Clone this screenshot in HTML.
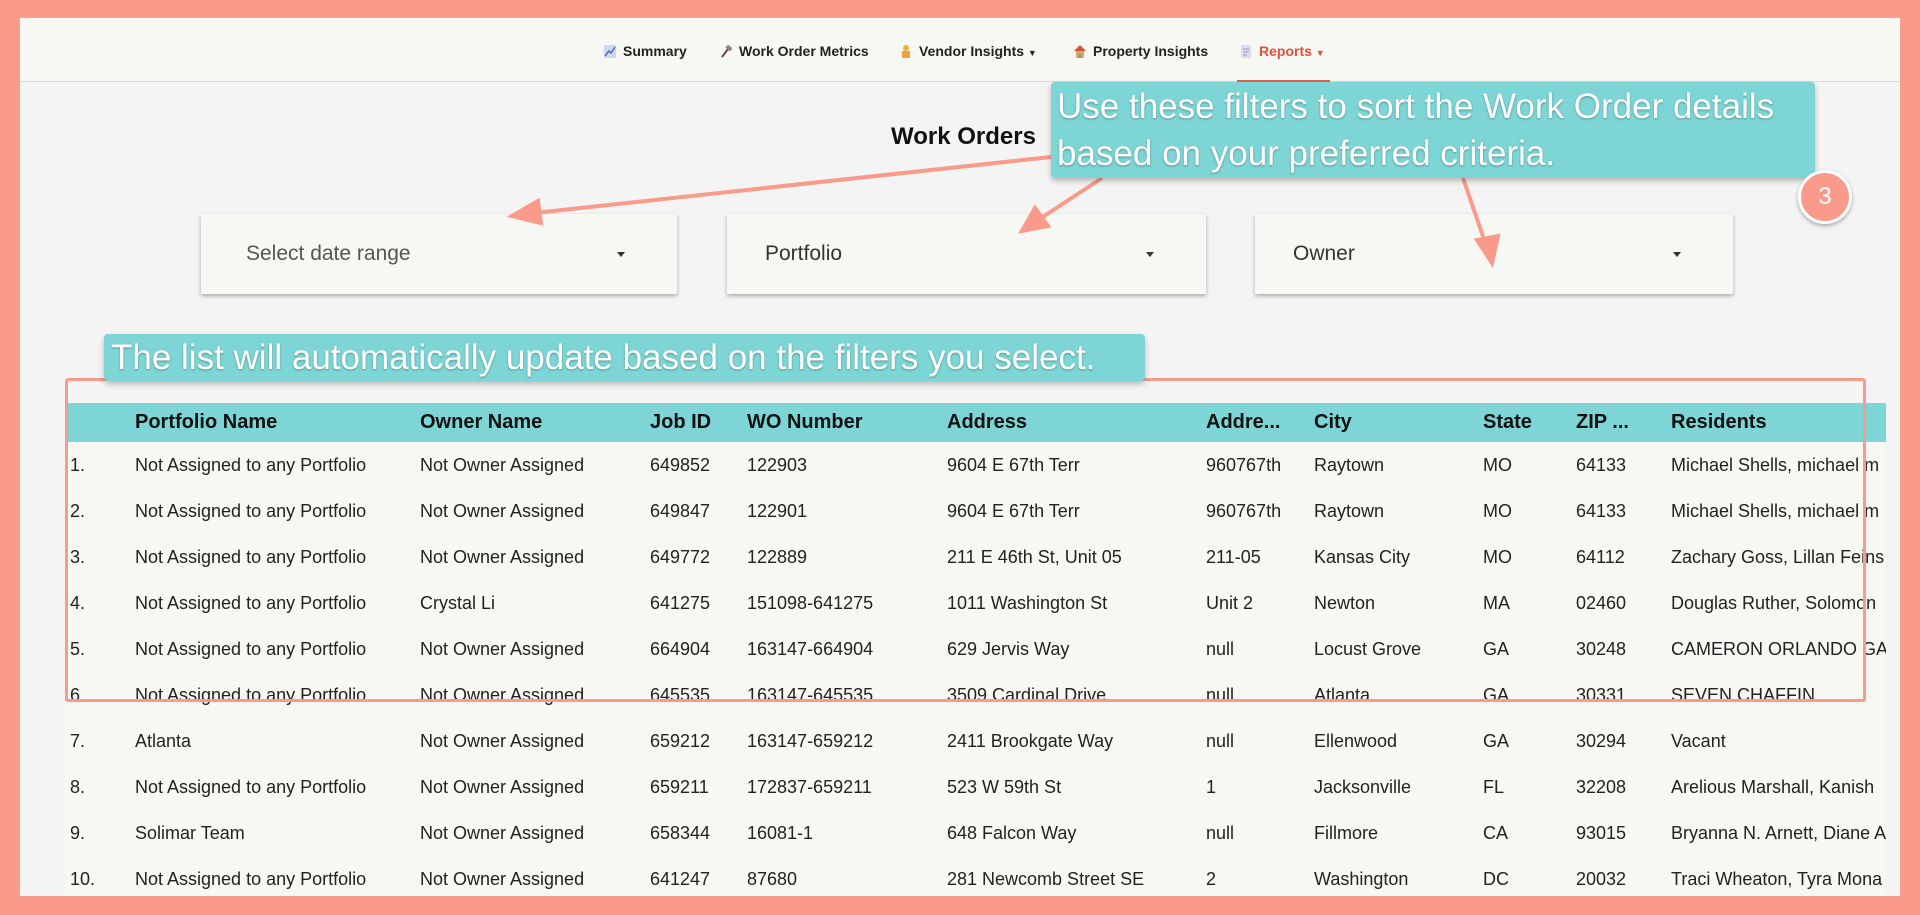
<!DOCTYPE html>
<html><head><meta charset="utf-8"><style>
*{margin:0;padding:0;box-sizing:border-box}
body{width:1920px;height:915px;background:#f99a8a;position:relative;overflow:hidden;font-family:"Liberation Sans",sans-serif;color:#222}
#page{position:absolute;left:20px;top:18px;width:1880px;height:878px;background:#f4f4f4;overflow:hidden}
#nav{position:absolute;left:0;top:0;width:1880px;height:64px;background:#f7f7f3;border-bottom:1px solid #d8d8d8}
.ni{position:absolute;top:25px;font-size:14px;font-weight:bold;color:#222;white-space:nowrap}
.ic{display:inline-block;width:12px;height:13px;margin-right:7px;vertical-align:-2px}
#ul{position:absolute;left:1217px;top:62px;width:93px;height:3px;background:#e0614f}
h1{position:absolute;left:871px;top:105px;font-size:24px;font-weight:bold;color:#111}
.dd{position:absolute;top:196px;height:80px;background:#f7f7f3;box-shadow:0 2px 4px rgba(0,0,0,.3)}
.dd span{position:absolute;left:38px;top:28px;font-size:21px;color:#333}
.dd i{position:absolute;right:52px;top:38px;border-left:4px solid transparent;border-right:4px solid transparent;border-top:5px solid #333}
.tip{position:absolute;background:#7dd5d5;color:#fff;border-radius:4px;box-shadow:0 3px 6px rgba(0,0,0,.25);text-shadow:0 1px 2px rgba(0,0,0,.3);white-space:nowrap;overflow:hidden}
table{position:absolute;left:45px;top:385px;width:1821px;border-collapse:collapse;font-size:18px;background:#f7f7f3;table-layout:fixed}
th{background:#7dd5d5;height:39px;text-align:left;font-weight:bold;font-size:20px;color:#111;white-space:nowrap;overflow:hidden}
td{height:46px;white-space:nowrap;overflow:hidden;color:#222}
#rect{position:absolute;left:45px;top:360px;width:1801px;height:324px;border:3px solid #f99a8a;border-radius:3px}
#c3{position:absolute;left:1778px;top:152px;width:54px;height:54px;border-radius:50%;background:#f99a8a;border:3px solid #fff;color:#fff;font-size:24px;text-align:center;line-height:48px;box-shadow:0 2px 4px rgba(0,0,0,.3)}
</style></head><body>
<div id="page">
<div id="nav">
<div class="ni" style="left:584px"><svg class="ic" viewBox="0 0 12 13"><rect width="12" height="13" fill="#cfd9ee"/><path d="M1 11L5 6L7 8L11 2" stroke="#4a6fc0" fill="none" stroke-width="1.5"/></svg>Summary</div>
<div class="ni" style="left:700px"><svg class="ic" viewBox="0 0 12 13"><path d="M2 12L8 4" stroke="#6b4a4a" stroke-width="2"/><rect x="6" y="1" width="6" height="4" fill="#888" transform="rotate(40 9 3)"/></svg>Work Order Metrics</div>
<div class="ni" style="left:880px"><svg class="ic" viewBox="0 0 12 13"><circle cx="6" cy="3" r="3" fill="#f0b030"/><rect x="2" y="6" width="8" height="7" fill="#f0a040"/></svg>Vendor Insights <span style="font-size:9px">▼</span></div>
<div class="ni" style="left:1054px"><svg class="ic" viewBox="0 0 12 13"><path d="M0 6L6 0L12 6Z" fill="#d2553a"/><rect x="2" y="6" width="8" height="7" fill="#e8a060"/><rect x="5" y="9" width="2" height="4" fill="#4aa0d0"/></svg>Property Insights</div>
<div class="ni" style="left:1220px;color:#e0503c"><svg class="ic" viewBox="0 0 12 13"><rect x="1" width="10" height="13" fill="#dcdcf0"/><path d="M3 4H9M3 7H9M3 10H7" stroke="#9a9ac0"/></svg>Reports <span style="font-size:9px">▼</span></div>
<div id="ul"></div>
</div>
<h1>Work Orders</h1>
<div class="dd" style="left:181px;width:476px"><span style="color:#555;left:45px">Select date range</span><i></i></div>
<div class="dd" style="left:707px;width:479px"><span>Portfolio</span><i></i></div>
<div class="dd" style="left:1235px;width:478px"><span>Owner</span><i></i></div>
<table>
<colgroup><col style="width:70px"><col style="width:285px"><col style="width:230px"><col style="width:97px"><col style="width:200px"><col style="width:259px"><col style="width:108px"><col style="width:169px"><col style="width:93px"><col style="width:95px"><col style="width:215px"></colgroup>
<tr><th></th><th>Portfolio Name</th><th>Owner Name</th><th>Job ID</th><th>WO Number</th><th>Address</th><th>Addre...</th><th>City</th><th>State</th><th>ZIP ...</th><th>Residents</th></tr>
<tr><td>&nbsp;1.</td><td>Not Assigned to any Portfolio</td><td>Not Owner Assigned</td><td>649852</td><td>122903</td><td>9604 E 67th Terr</td><td>960767th</td><td>Raytown</td><td>MO</td><td>64133</td><td>Michael Shells, michael m</td></tr>
<tr><td>&nbsp;2.</td><td>Not Assigned to any Portfolio</td><td>Not Owner Assigned</td><td>649847</td><td>122901</td><td>9604 E 67th Terr</td><td>960767th</td><td>Raytown</td><td>MO</td><td>64133</td><td>Michael Shells, michael m</td></tr>
<tr><td>&nbsp;3.</td><td>Not Assigned to any Portfolio</td><td>Not Owner Assigned</td><td>649772</td><td>122889</td><td>211 E 46th St, Unit 05</td><td>211-05</td><td>Kansas City</td><td>MO</td><td>64112</td><td>Zachary Goss, Lillan Feins</td></tr>
<tr><td>&nbsp;4.</td><td>Not Assigned to any Portfolio</td><td>Crystal Li</td><td>641275</td><td>151098-641275</td><td>1011 Washington St</td><td>Unit 2</td><td>Newton</td><td>MA</td><td>02460</td><td>Douglas Ruther, Solomon</td></tr>
<tr><td>&nbsp;5.</td><td>Not Assigned to any Portfolio</td><td>Not Owner Assigned</td><td>664904</td><td>163147-664904</td><td>629 Jervis Way</td><td>null</td><td>Locust Grove</td><td>GA</td><td>30248</td><td>CAMERON ORLANDO GA</td></tr>
<tr><td>&nbsp;6.</td><td>Not Assigned to any Portfolio</td><td>Not Owner Assigned</td><td>645535</td><td>163147-645535</td><td>3509 Cardinal Drive</td><td>null</td><td>Atlanta</td><td>GA</td><td>30331</td><td>SEVEN CHAFFIN</td></tr>
<tr><td>&nbsp;7.</td><td>Atlanta</td><td>Not Owner Assigned</td><td>659212</td><td>163147-659212</td><td>2411 Brookgate Way</td><td>null</td><td>Ellenwood</td><td>GA</td><td>30294</td><td>Vacant</td></tr>
<tr><td>&nbsp;8.</td><td>Not Assigned to any Portfolio</td><td>Not Owner Assigned</td><td>659211</td><td>172837-659211</td><td>523 W 59th St</td><td>1</td><td>Jacksonville</td><td>FL</td><td>32208</td><td>Arelious Marshall, Kanish</td></tr>
<tr><td>&nbsp;9.</td><td>Solimar Team</td><td>Not Owner Assigned</td><td>658344</td><td>16081-1</td><td>648 Falcon Way</td><td>null</td><td>Fillmore</td><td>CA</td><td>93015</td><td>Bryanna N. Arnett, Diane A</td></tr>
<tr><td>&nbsp;10.</td><td>Not Assigned to any Portfolio</td><td>Not Owner Assigned</td><td>641247</td><td>87680</td><td>281 Newcomb Street SE</td><td>2</td><td>Washington</td><td>DC</td><td>20032</td><td>Traci Wheaton, Tyra Mona</td></tr>
</table>
<div id="rect"></div>
<svg style="position:absolute;left:0;top:0" width="1880" height="878">
<g stroke="#f99a8a" stroke-width="4" fill="#f99a8a">
<line x1="1031" y1="139" x2="505" y2="196"/><polygon points="492,198 518,183 521,205"/>
<line x1="1082" y1="160" x2="1012" y2="206"/><polygon points="1002,213 1015,190 1028,208"/>
<line x1="1443" y1="160" x2="1468" y2="233"/><polygon points="1472,245 1457,222 1478,218"/>
</g></svg>
<div class="tip" style="left:1031px;top:64px;width:764px;height:96px;font-size:35px;line-height:47px;padding:1px 0 0 6px">Use these filters to sort the Work Order details<br>based on your preferred criteria.</div>
<div class="tip" style="left:84px;top:316px;width:1041px;height:47px;font-size:35px;line-height:47px;padding-left:7px">The list will automatically update based on the filters you select.</div>
<div id="c3">3</div>
</div>
</body></html>
